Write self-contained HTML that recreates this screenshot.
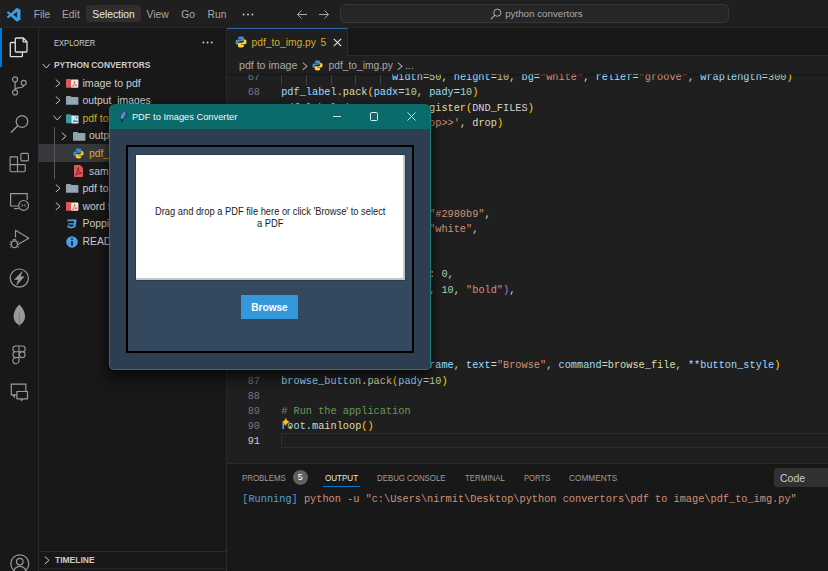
<!DOCTYPE html>
<html><head><meta charset="utf-8">
<style>
*{margin:0;padding:0;box-sizing:border-box}
html,body{width:828px;height:571px;overflow:hidden;background:#181818;font-family:"Liberation Sans",sans-serif;color:#cccccc;position:relative}
.a{position:absolute;white-space:nowrap}
.mono{font-family:"Liberation Mono",monospace;font-size:10.27px;line-height:15.17px;height:15.17px;white-space:pre}
#title{left:0;top:0;width:828px;height:28px;background:#1f1f1f;border-bottom:1px solid #262626}
#act{left:0;top:28px;width:39px;height:543px;background:#181818;border-right:1px solid #2b2b2b}
#side{left:39px;top:28px;width:188px;height:543px;background:#181818;border-right:1px solid #2b2b2b}
#tabs{left:227px;top:28px;width:601px;height:28px;background:#181818;border-bottom:1px solid #2b2b2b}
#editor{left:227px;top:56px;width:601px;height:407px;background:#1f1f1f}
#panel{left:227px;top:463px;width:601px;height:108px;background:#181818;border-top:1px solid #2b2b2b}
.menu{top:4.5px;height:19px;line-height:19px;font-size:10.3px;color:#a8a8a8}
.sx{transform-origin:0 0}
.ln{left:227px;width:33px;text-align:right;color:#6e7681}
.code{left:281.2px}
.v{color:#9cdcfe}.f{color:#dcdcaa}.s{color:#ce9178}.n{color:#b5cea8}.p{color:#d4d4d4}.g{color:#ffd700}.c{color:#6a9955}.o{color:#da70d6}.k{color:#569cd6}
.row{height:17.6px;line-height:17.6px;font-size:10.4px;color:#cccccc}
.ptab{top:470px;height:17px;line-height:17px;font-size:8.8px;color:#9d9d9d}
svg{position:absolute;overflow:visible}
</style></head><body>
<div id="title" class="a"></div>
<div id="act" class="a"></div>
<div id="side" class="a"></div>
<div id="tabs" class="a"></div>
<div id="editor" class="a"></div>
<div id="panel" class="a"></div>

<!-- ===== TITLE BAR ===== -->
<svg style="left:7px;top:7.5px" width="13.5" height="13.5" viewBox="0 0 100 100"><path fill="#3d9de6" d="M96.46 10.8L75.86.87a6.23 6.23 0 0 0-7.12 1.21L29.3 38.05 12.12 25.01a4.17 4.17 0 0 0-5.32.24l-5.5 5a4.17 4.17 0 0 0 0 6.16L16.2 50 1.3 63.59a4.17 4.17 0 0 0 0 6.16l5.5 5a4.17 4.17 0 0 0 5.32.24L29.3 61.95l39.44 35.97a6.23 6.23 0 0 0 7.12 1.21l20.6-9.93A6.25 6.25 0 0 0 100 83.57V16.43a6.25 6.25 0 0 0-3.54-5.63zM75 72.72L45.07 50 75 27.28z"/></svg>
<div class="a menu" style="left:33.7px">File</div>
<div class="a menu" style="left:62px">Edit</div>
<div class="a" style="left:86.4px;top:5.4px;width:54.4px;height:16.8px;border-radius:4px;background:#2f2f2f"></div>
<div class="a menu" style="left:92.3px;color:#e8e8e8">Selection</div>
<div class="a menu" style="left:146.6px">View</div>
<div class="a menu" style="left:181.2px">Go</div>
<div class="a menu" style="left:207.6px">Run</div>
<svg style="left:242px;top:12.5px" width="12" height="3" viewBox="0 0 12 3"><circle cx="1.6" cy="1.5" r="0.95" fill="#c8c8c8"/><circle cx="6" cy="1.5" r="0.95" fill="#c8c8c8"/><circle cx="10.4" cy="1.5" r="0.95" fill="#c8c8c8"/></svg>
<svg style="left:296px;top:9px" width="12" height="11" viewBox="0 0 12 11"><path d="M11 5.5H1.5M5.5 1.5L1.5 5.5 5.5 9.5" stroke="#a8a8a8" stroke-width="1" fill="none"/></svg>
<svg style="left:317.5px;top:9px" width="12" height="11" viewBox="0 0 12 11"><path d="M1 5.5H10.5M6.5 1.5L10.5 5.5 6.5 9.5" stroke="#a8a8a8" stroke-width="1" fill="none"/></svg>
<div class="a" style="left:340px;top:4.2px;width:389px;height:18.6px;border-radius:5px;background:#262626;border:1px solid #363636"></div>
<svg style="left:490px;top:8px" width="12" height="12" viewBox="0 0 12 12"><circle cx="7.3" cy="4.7" r="3.6" stroke="#b0b0b0" stroke-width="1" fill="none"/><path d="M4.7 7.3L0.8 11.2" stroke="#b0b0b0" stroke-width="1.1"/></svg>
<div class="a" style="left:505.2px;top:3.9px;height:19px;line-height:19px;font-size:9.75px;color:#aaaaaa">python convertors</div>

<!-- ===== ACTIVITY BAR ===== -->
<div class="a" style="left:0;top:28px;width:2px;height:39px;background:#0078d4"></div>
<!-- explorer -->
<svg style="left:9px;top:37px" width="20" height="21" viewBox="0 0 20 21"><path d="M7.1 1H14.3L18 4.7V14.2Q18 15 17.2 15H7.1Q6.3 15 6.3 14.2V1.8Q6.3 1 7.1 1Z M14.2 1.3V4.8H17.7" stroke="#dcdcdc" stroke-width="1.3" fill="none" stroke-linejoin="round"/><path d="M6.3 5.5H2.1Q1.3 5.5 1.3 6.3V18.9Q1.3 19.7 2.1 19.7H12.6Q13.4 19.7 13.4 18.9V15" stroke="#dcdcdc" stroke-width="1.3" fill="none" stroke-linejoin="round"/></svg>
<!-- scm -->
<svg style="left:10px;top:76px" width="18" height="21" viewBox="0 0 18 21"><circle cx="5.05" cy="3.4" r="2.5" stroke="#999999" stroke-width="1.2" fill="none"/><circle cx="5.05" cy="16.5" r="2.5" stroke="#999999" stroke-width="1.2" fill="none"/><circle cx="13.7" cy="6.8" r="2.5" stroke="#999999" stroke-width="1.2" fill="none"/><path d="M5.05 5.9V14M13.7 9.3C13.5 11.3 11.5 11.7 8.5 11.9C6.3 12.1 5.3 12.8 5.05 14" stroke="#999999" stroke-width="1.2" fill="none"/></svg>
<!-- search -->
<svg style="left:10px;top:114px" width="20" height="20" viewBox="0 0 20 20"><circle cx="12" cy="7.5" r="5.8" stroke="#999999" stroke-width="1.3" fill="none"/><path d="M7.8 11.7L1 18.6" stroke="#999999" stroke-width="1.4"/></svg>
<!-- extensions -->
<svg style="left:9px;top:152px" width="20" height="21" viewBox="0 0 20 21"><path d="M2 4.8H8.5V12.6H15.3Q16.2 12.6 16.2 13.5V18.8Q16.2 19.7 15.3 19.7H2Q1.1 19.7 1.1 18.8V5.7Q1.1 4.8 2 4.8Z M1.1 12.6H8.5V19.7" stroke="#999999" stroke-width="1.15" fill="none" stroke-linejoin="round"/><rect x="11.9" y="1.4" width="7.5" height="7.4" rx="1" stroke="#999999" stroke-width="1.15" fill="none"/></svg>
<!-- remote explorer -->
<svg style="left:9px;top:192px" width="21" height="19" viewBox="0 0 21 19"><path d="M9.5 14H1.6V1.6H18.2V8" stroke="#999999" stroke-width="1.2" fill="none"/><path d="M5 16.6H9.6" stroke="#999999" stroke-width="1.2"/><circle cx="14.6" cy="13.4" r="4.9" stroke="#999999" stroke-width="1.2" fill="none"/><path d="M12.6 11.9L13.9 13.4L12.6 14.9M16.6 11.9L15.3 13.4L16.6 14.9" stroke="#999999" stroke-width="0.9" fill="none"/></svg>
<!-- run debug -->
<svg style="left:9px;top:229px" width="21" height="20" viewBox="0 0 21 20"><path d="M6.5 8.5V1.3L19.8 9.2L9.8 15" stroke="#999999" stroke-width="1.2" fill="none" stroke-linejoin="round"/><ellipse cx="5.4" cy="15.2" rx="3" ry="3.4" stroke="#999999" stroke-width="1.2" fill="none"/><path d="M3.6 11.6A1.9 1.9 0 0 1 7.2 11.6" stroke="#999999" stroke-width="1.1" fill="none"/><path d="M0.8 12.6L2.4 13.4M0.6 15.4H2.4M1 18.4L2.6 17.2M10 12.6L8.4 13.4M10.2 15.4H8.4M9.8 18.4L8.2 17.2" stroke="#999999" stroke-width="1"/></svg>
<!-- lightning -->
<svg style="left:9px;top:268px" width="21" height="21" viewBox="0 0 21 21"><circle cx="10.3" cy="10.1" r="9.1" stroke="#999999" stroke-width="1.2" fill="none"/><path d="M13.2 3.5L5.6 11.5H9.5L7.6 17L15 8.8H11.2Z" fill="#9a9a9a" stroke="#9a9a9a" stroke-width="0.6" stroke-linejoin="round"/></svg>
<!-- leaf -->
<svg style="left:13.3px;top:304px" width="13" height="24" viewBox="0 0 13 24"><path d="M6.3 0.5C10 4 12 8 12 12.5C12 16.5 9.5 19.5 6.3 21.3C3.1 19.5 0.6 16.5 0.6 12.5C0.6 8 2.6 4 6.3 0.5Z" fill="#9a9a9a"/><path d="M6.3 9V23" stroke="#6e6e6e" stroke-width="0.7"/></svg>
<!-- figma -->
<svg style="left:12px;top:345px" width="15" height="20" viewBox="0 0 15 20"><path d="M3.8 1H7V6.8H3.8A2.9 2.9 0 0 1 3.8 1Z M7 1H10.3A2.9 2.9 0 0 1 10.3 6.8H7Z M3.8 6.8H7V12.6H3.8A2.9 2.9 0 0 1 3.8 6.8Z M3.8 12.6H7V15.5A3.1 3.1 0 1 1 3.8 12.6Z" stroke="#999999" stroke-width="1.1" fill="none"/><circle cx="10.2" cy="9.7" r="2.9" stroke="#999999" stroke-width="1.1" fill="none"/></svg>
<!-- comments -->
<svg style="left:10px;top:383px" width="19" height="19" viewBox="0 0 19 19"><path d="M6.9 11.9H1.3V1.2H15.8V8.5" stroke="#999999" stroke-width="1.2" fill="none"/><path d="M2.6 11.9L4.4 14V11.9" stroke="#999999" stroke-width="1.1" fill="none"/><path d="M6.9 8.5H17.5V15.8H13.2L11.4 17.5V15.8H6.9Z" stroke="#999999" stroke-width="1.2" fill="none" stroke-linejoin="round"/></svg>
<!-- account -->
<svg style="left:9.5px;top:554px" width="20" height="20" viewBox="0 0 20 20"><circle cx="9.8" cy="9.8" r="9" stroke="#999999" stroke-width="1.2" fill="none"/><circle cx="9.8" cy="7.6" r="3.3" stroke="#999999" stroke-width="1.2" fill="none"/><path d="M3.7 16.5C5 13.5 7.2 12.3 9.8 12.3C12.4 12.3 14.6 13.5 15.9 16.5" stroke="#999999" stroke-width="1.2" fill="none"/></svg>

<!-- ===== SIDEBAR ===== -->
<div class="a sx" style="left:53.9px;top:35.2px;height:16px;line-height:16px;font-size:8.8px;color:#cccccc;transform:scaleX(0.86)">EXPLORER</div>
<svg style="left:202px;top:40.8px" width="12" height="3" viewBox="0 0 12 3"><circle cx="1.4" cy="1.5" r="0.95" fill="#d0d0d0"/><circle cx="5.6" cy="1.5" r="0.95" fill="#d0d0d0"/><circle cx="9.8" cy="1.5" r="0.95" fill="#d0d0d0"/></svg>
<svg style="left:42.2px;top:62.5px" width="9" height="6" viewBox="0 0 9 6"><path d="M0.6 0.8L4.3 5 8 0.8" stroke="#c5c5c5" stroke-width="1" fill="none"/></svg>
<div class="a sx" style="left:54px;top:57.2px;height:16px;line-height:16px;font-size:8.8px;font-weight:bold;color:#cccccc;transform:scaleX(0.954)">PYTHON CONVERTORS</div>

<!-- tree rows -->
<div class="a" style="left:38px;top:144.2px;width:188px;height:17.8px;background:#37383c"></div>
<div class="a" style="left:53.5px;top:127px;width:1px;height:52px;background:#585858"></div>
<svg style="left:54.5px;top:78.7px" width="6" height="9" viewBox="0 0 6 9"><path d="M0.8 0.6L5 4.3 0.8 8" stroke="#c5c5c5" stroke-width="1" fill="none"/></svg>
<svg style="left:66px;top:78.7px" width="13" height="9" viewBox="0 0 13 9"><path d="M0 0.8Q0 0 0.8 0H5V8.8H0.8Q0 8.8 0 8.2Z" fill="#e05656"/><rect x="5" y="0.6" width="7.4" height="8.2" rx="0.8" fill="#f6e8e4"/><path d="M6.5 7.5C7.8 5.5 8.8 3.5 8.6 2.2C8.1 3.5 9.3 5.8 11.2 6.5C9.6 6.4 7.9 6.9 6.5 7.5Z" stroke="#d94a3a" stroke-width="0.7" fill="none"/></svg>
<div class="a row" style="left:82.5px;top:74.6px;font-size:10.6px;color:#cccccc">image to pdf</div>
<svg style="left:54.5px;top:96.3px" width="6" height="9" viewBox="0 0 6 9"><path d="M0.8 0.6L5 4.3 0.8 8" stroke="#c5c5c5" stroke-width="1" fill="none"/></svg>
<svg style="left:66px;top:96.3px" width="13" height="9" viewBox="0 0 13 9"><path d="M0 0.8Q0 0 0.8 0H4.5L5.5 1H11.7Q12.4 1 12.4 1.8V8.2Q12.4 8.8 11.7 8.8H0.8Q0 8.8 0 8.2Z" fill="#90a4ae"/><rect x="3" y="2.6" width="6" height="5" fill="#9fb1b9" opacity="0.35"/></svg>
<div class="a row" style="left:82.5px;top:92.2px;font-size:10.4px;color:#cccccc">output_images</div>
<svg style="left:53px;top:115.4px" width="9" height="6" viewBox="0 0 9 6"><path d="M0.6 0.8L4.3 5 8 0.8" stroke="#c5c5c5" stroke-width="1" fill="none"/></svg>
<svg style="left:66px;top:113.7px" width="13" height="10" viewBox="0 0 13 10"><path d="M0 1Q0 0.2 0.8 0.2H4.5L5.5 1.2H7V9.2H0.8Q0 9.2 0 8.4Z" fill="#3a9a9a"/><rect x="5.5" y="1.5" width="7" height="8" rx="0.8" fill="#d8e8ee"/><path d="M6.5 8L8.5 5.5 10 7 11 6 12 8Z" fill="#3a8ac8"/><circle cx="10.5" cy="3.5" r="0.9" fill="#3a8ac8"/></svg>
<div class="a row" style="left:82.5px;top:109.8px;font-size:10.4px;color:#d2ae22">pdf to image</div>
<svg style="left:60.8px;top:131.5px" width="6" height="9" viewBox="0 0 6 9"><path d="M0.8 0.6L5 4.3 0.8 8" stroke="#c5c5c5" stroke-width="1" fill="none"/></svg>
<svg style="left:72.5px;top:131.5px" width="13" height="9" viewBox="0 0 13 9"><path d="M0 0.8Q0 0 0.8 0H4.5L5.5 1H11.7Q12.4 1 12.4 1.8V8.2Q12.4 8.8 11.7 8.8H0.8Q0 8.8 0 8.2Z" fill="#90a4ae"/><rect x="3" y="2.6" width="6" height="5" fill="#9fb1b9" opacity="0.35"/></svg>
<div class="a row" style="left:89px;top:127.4px;font-size:10.4px;color:#cccccc">output_images</div>
<svg style="left:73px;top:147.9px" width="11" height="11" viewBox="0 0 12 12"><path d="M6 0.5C3 0.5 3.2 1.8 3.2 1.8V3.2H6.1V3.7H2C0.6 3.7 0.5 5.2 0.5 6.2C0.5 7.4 0.8 8.6 2 8.6H3V7.2C3 6 4 5.2 5 5.2H7.8C8.6 5.2 9 4.6 9 3.9V1.8C9 1 8 0.5 6 0.5Z" fill="#3d8fd6"/><path d="M6 11.5C9 11.5 8.8 10.2 8.8 10.2V8.8H5.9V8.3H10C11.4 8.3 11.5 6.8 11.5 5.8C11.5 4.6 11.2 3.4 10 3.4H9V4.8C9 6 8 6.8 7 6.8H4.2C3.4 6.8 3 7.4 3 8.1V10.2C3 11 4 11.5 6 11.5Z" fill="#f3cf3a"/></svg>
<div class="a row" style="left:89px;top:145.0px;font-size:10.4px;color:#d2ae22">pdf_to_img.py</div>
<svg style="left:74px;top:165.2px" width="9" height="12" viewBox="0 0 9 12"><path d="M0 0.8Q0 0 0.8 0H6L9 3V11.2Q9 12 8.2 12H0.8Q0 12 0 11.2Z" fill="#e05656"/><path d="M1.8 10C3.2 7.5 4.5 4.5 4.2 2.5C3.6 4.3 5 7.2 7.4 8.2C5.5 8.1 3.5 8.9 1.8 10Z" stroke="#3a1a1a" stroke-width="0.8" fill="none" opacity="0.8"/></svg>
<div class="a row" style="left:89px;top:162.6px;font-size:10.4px;color:#cccccc">sample.pdf</div>
<svg style="left:54.5px;top:184.3px" width="6" height="9" viewBox="0 0 6 9"><path d="M0.8 0.6L5 4.3 0.8 8" stroke="#c5c5c5" stroke-width="1" fill="none"/></svg>
<svg style="left:66px;top:184.3px" width="13" height="9" viewBox="0 0 13 9"><path d="M0 0.8Q0 0 0.8 0H4.5L5.5 1H11.7Q12.4 1 12.4 1.8V8.2Q12.4 8.8 11.7 8.8H0.8Q0 8.8 0 8.2Z" fill="#90a4ae"/><rect x="3" y="2.6" width="6" height="5" fill="#9fb1b9" opacity="0.35"/></svg>
<div class="a row" style="left:82.5px;top:180.2px;font-size:10.4px;color:#cccccc">pdf to word</div>
<svg style="left:54.5px;top:201.9px" width="6" height="9" viewBox="0 0 6 9"><path d="M0.8 0.6L5 4.3 0.8 8" stroke="#c5c5c5" stroke-width="1" fill="none"/></svg>
<svg style="left:66px;top:201.9px" width="13" height="9" viewBox="0 0 13 9"><path d="M0 0.8Q0 0 0.8 0H5V8.8H0.8Q0 8.8 0 8.2Z" fill="#e05656"/><rect x="5" y="0.6" width="7.4" height="8.2" rx="0.8" fill="#f6e8e4"/><path d="M6.5 7.5C7.8 5.5 8.8 3.5 8.6 2.2C8.1 3.5 9.3 5.8 11.2 6.5C9.6 6.4 7.9 6.9 6.5 7.5Z" stroke="#d94a3a" stroke-width="0.7" fill="none"/></svg>
<div class="a row" style="left:82.5px;top:197.8px;font-size:10.4px;color:#cccccc">word to pdf</div>
<svg style="left:66.3px;top:218.6px" width="11" height="10" viewBox="0 0 11 10"><path d="M1.6 0.5H10.6L9.4 8.2L5 9.6L1.2 8.2L1.5 6.6H3.3L3.2 7.2L5.2 7.8L7.4 7.2L7.7 5.6H1.9L2.2 4.2H7.9L8.1 2.3H1.3Z" fill="#4a9fe8"/></svg>
<div class="a row" style="left:82.5px;top:215.4px;font-size:10.4px;color:#cccccc">Poppins-Bold.ttf</div>
<svg style="left:66.2px;top:235.5px" width="12" height="12" viewBox="0 0 12 12"><circle cx="6" cy="6" r="5.8" fill="#4a9fe8"/><rect x="5.1" y="5" width="1.8" height="4.6" fill="#102030"/><circle cx="6" cy="3.1" r="1" fill="#102030"/></svg>
<div class="a row" style="left:82.5px;top:233.0px;font-size:10.4px;color:#cccccc">README.md</div>
<!-- timeline -->
<div class="a" style="left:39px;top:551px;width:187px;height:1px;background:#2b2b2b"></div>
<svg style="left:44.2px;top:555.5px" width="6" height="9" viewBox="0 0 6 9"><path d="M0.8 0.6L5 4.3 0.8 8" stroke="#c5c5c5" stroke-width="1" fill="none"/></svg>
<div class="a sx" style="left:54.7px;top:551.7px;height:16px;line-height:16px;font-size:8.8px;font-weight:bold;color:#cccccc;transform:scaleX(0.963)">TIMELINE</div>
<div class="a" style="left:39px;top:568.3px;width:187px;height:1px;background:#262626"></div>

<!-- ===== EDITOR TABS ===== -->
<div class="a" style="left:227px;top:28px;width:121px;height:28px;background:#1f1f1f;border-top:1px solid #2b62a3;border-right:1px solid #2b2b2b"></div>
<svg style="left:235px;top:36.3px" width="12" height="12" viewBox="0 0 12 12"><path d="M6 0.5C3 0.5 3.2 1.8 3.2 1.8V3.2H6.1V3.7H2C0.6 3.7 0.5 5.2 0.5 6.2C0.5 7.4 0.8 8.6 2 8.6H3V7.2C3 6 4 5.2 5 5.2H7.8C8.6 5.2 9 4.6 9 3.9V1.8C9 1 8 0.5 6 0.5Z" fill="#4b8bbe"/><path d="M6 11.5C9 11.5 8.8 10.2 8.8 10.2V8.8H5.9V8.3H10C11.4 8.3 11.5 6.8 11.5 5.8C11.5 4.6 11.2 3.4 10 3.4H9V4.8C9 6 8 6.8 7 6.8H4.2C3.4 6.8 3 7.4 3 8.1V10.2C3 11 4 11.5 6 11.5Z" fill="#ffd43b"/></svg>
<div class="a" style="left:251.5px;top:34px;height:17px;line-height:17px;font-size:10.25px;color:#d2ae22">pdf_to_img.py</div>
<div class="a" style="left:320.5px;top:34px;height:17px;line-height:17px;font-size:10.25px;color:#d2ae22">5</div>
<svg style="left:333px;top:37.7px" width="9" height="9" viewBox="0 0 9 9"><path d="M0.8 0.8L8.2 8.2M8.2 0.8L0.8 8.2" stroke="#e0e0e0" stroke-width="1.1"/></svg>
<!-- breadcrumbs -->
<div class="a" style="left:239px;top:57px;height:17px;line-height:17px;font-size:10.6px;color:#a9a9a9">pdf to image</div>
<svg style="left:302px;top:61.5px" width="6" height="9" viewBox="0 0 6 9"><path d="M0.7 0.6L5 4.2 0.7 7.8" stroke="#a9a9a9" stroke-width="1.05" fill="none"/></svg>
<svg style="left:311.5px;top:60px" width="11" height="11" viewBox="0 0 12 12"><path d="M6 0.5C3 0.5 3.2 1.8 3.2 1.8V3.2H6.1V3.7H2C0.6 3.7 0.5 5.2 0.5 6.2C0.5 7.4 0.8 8.6 2 8.6H3V7.2C3 6 4 5.2 5 5.2H7.8C8.6 5.2 9 4.6 9 3.9V1.8C9 1 8 0.5 6 0.5Z" fill="#4b8bbe"/><path d="M6 11.5C9 11.5 8.8 10.2 8.8 10.2V8.8H5.9V8.3H10C11.4 8.3 11.5 6.8 11.5 5.8C11.5 4.6 11.2 3.4 10 3.4H9V4.8C9 6 8 6.8 7 6.8H4.2C3.4 6.8 3 7.4 3 8.1V10.2C3 11 4 11.5 6 11.5Z" fill="#ffd43b"/></svg>
<div class="a" style="left:328.5px;top:57px;height:17px;line-height:17px;font-size:10.25px;color:#a9a9a9">pdf_to_img.py</div>
<svg style="left:397px;top:61.5px" width="6" height="9" viewBox="0 0 6 9"><path d="M0.7 0.6L5 4.2 0.7 7.8" stroke="#a9a9a9" stroke-width="1.05" fill="none"/></svg>
<div class="a" style="left:405px;top:57px;height:17px;line-height:17px;font-size:10.25px;color:#a9a9a9">...</div>
<!-- ===== CODE ===== -->
<div class="a" style="left:227px;top:73.6px;width:601px;height:389.4px;overflow:hidden"><div class="a" style="left:0;top:1.9px;width:601px;height:400px">
<div class="a mono" style="left:0;top:-5.25px;width:33px;text-align:right;color:#6e7681">67</div>
<div class="a mono" style="left:54.2px;top:-5.25px"><span class="p">                  </span><span class="v">width</span><span class="p">=</span><span class="n">50</span><span class="p">, </span><span class="v">height</span><span class="p">=</span><span class="n">10</span><span class="p">, </span><span class="v">bg</span><span class="p">=</span><span class="s">"white"</span><span class="p">, </span><span class="v">relief</span><span class="p">=</span><span class="s">"groove"</span><span class="p">, </span><span class="v">wraplength</span><span class="p">=</span><span class="n">300</span><span class="g">)</span></div>
<div class="a mono" style="left:0;top:9.92px;width:33px;text-align:right;color:#6e7681">68</div>
<div class="a mono" style="left:54.2px;top:9.92px"><span class="v">pdf_label</span><span class="p">.</span><span class="f">pack</span><span class="g">(</span><span class="v">padx</span><span class="p">=</span><span class="n">10</span><span class="p">, </span><span class="v">pady</span><span class="p">=</span><span class="n">10</span><span class="g">)</span></div>
<div class="a mono" style="left:0;top:25.09px;width:33px;text-align:right;color:#6e7681">69</div>
<div class="a mono" style="left:54.2px;top:25.09px"><span class="v">pdf_label</span><span class="p">.</span><span class="f">drop_target_register</span><span class="g">(</span><span class="p">DND_FILES</span><span class="g">)</span></div>
<div class="a mono" style="left:0;top:40.26px;width:33px;text-align:right;color:#6e7681">70</div>
<div class="a mono" style="left:54.2px;top:40.26px"><span class="v">pdf_label</span><span class="p">.</span><span class="f">dnd_bind</span><span class="g">(</span><span class="s">'&lt;&lt;Drop&gt;&gt;'</span><span class="p">, </span><span class="f">drop</span><span class="g">)</span></div>
<div class="a mono" style="left:0;top:55.42px;width:33px;text-align:right;color:#6e7681">71</div>
<div class="a mono" style="left:0;top:70.59px;width:33px;text-align:right;color:#6e7681">72</div>
<div class="a mono" style="left:54.2px;top:70.59px"><span class="c"># Button style</span></div>
<div class="a mono" style="left:0;top:85.76px;width:33px;text-align:right;color:#6e7681">73</div>
<div class="a mono" style="left:54.2px;top:85.76px"><span class="v">button_style</span><span class="p"> = </span><span class="g">{</span></div>
<div class="a mono" style="left:0;top:100.93px;width:33px;text-align:right;color:#6e7681">74</div>
<div class="a mono" style="left:54.2px;top:100.93px"><span class="p">    </span><span class="s">"bg"</span><span class="p">: </span><span class="s">"#3498db"</span><span class="p">,</span></div>
<div class="a mono" style="left:0;top:116.10px;width:33px;text-align:right;color:#6e7681">75</div>
<div class="a mono" style="left:54.2px;top:116.10px"><span class="p">    </span><span class="s">"fg"</span><span class="p">: </span><span class="s">"white"</span><span class="p">,</span></div>
<div class="a mono" style="left:0;top:131.28px;width:33px;text-align:right;color:#6e7681">76</div>
<div class="a mono" style="left:54.2px;top:131.28px"><span class="p">    </span><span class="s">"activebackground"</span><span class="p">: </span><span class="s">"#2980b9"</span><span class="p">,</span></div>
<div class="a mono" style="left:0;top:146.44px;width:33px;text-align:right;color:#6e7681">77</div>
<div class="a mono" style="left:54.2px;top:146.44px"><span class="p">    </span><span class="s">"activeforeground"</span><span class="p">: </span><span class="s">"white"</span><span class="p">,</span></div>
<div class="a mono" style="left:0;top:161.61px;width:33px;text-align:right;color:#6e7681">78</div>
<div class="a mono" style="left:54.2px;top:161.61px"><span class="p">    </span><span class="s">"relief"</span><span class="p">: </span><span class="s">"flat"</span><span class="p">,</span></div>
<div class="a mono" style="left:0;top:176.78px;width:33px;text-align:right;color:#6e7681">79</div>
<div class="a mono" style="left:54.2px;top:176.78px"><span class="p">    </span><span class="s">"bd"</span><span class="p">: </span><span class="n">0</span><span class="p">,</span></div>
<div class="a mono" style="left:0;top:191.95px;width:33px;text-align:right;color:#6e7681">80</div>
<div class="a mono" style="left:54.2px;top:191.95px"><span class="p">    </span><span class="s">"highlightthickness"</span><span class="p">: </span><span class="n">0</span><span class="p">,</span></div>
<div class="a mono" style="left:0;top:207.13px;width:33px;text-align:right;color:#6e7681">81</div>
<div class="a mono" style="left:54.2px;top:207.13px"><span class="p">    </span><span class="s">"font"</span><span class="p">: </span><span class="o">(</span><span class="s">"Helvetica"</span><span class="p">, </span><span class="n">10</span><span class="p">, </span><span class="s">"bold"</span><span class="o">)</span><span class="p">,</span></div>
<div class="a mono" style="left:0;top:222.30px;width:33px;text-align:right;color:#6e7681">82</div>
<div class="a mono" style="left:54.2px;top:222.30px"><span class="g">}</span></div>
<div class="a mono" style="left:0;top:237.47px;width:33px;text-align:right;color:#6e7681">83</div>
<div class="a mono" style="left:0;top:252.64px;width:33px;text-align:right;color:#6e7681">84</div>
<div class="a mono" style="left:54.2px;top:267.81px"><span class="c"># Browse button</span></div>
<div class="a mono" style="left:0;top:267.81px;width:33px;text-align:right;color:#6e7681">85</div>
<div class="a mono" style="left:54.2px;top:282.98px"><span class="v">browse_button</span><span class="p"> = </span><span class="f">Button</span><span class="g">(</span><span class="v">frame</span><span class="p">, </span><span class="v">text</span><span class="p">=</span><span class="s">"Browse"</span><span class="p">, </span><span class="v">command</span><span class="p">=</span><span class="f">browse_file</span><span class="p">, **</span><span class="v">button_style</span><span class="g">)</span></div>
<div class="a mono" style="left:0;top:282.98px;width:33px;text-align:right;color:#6e7681">86</div>
<div class="a mono" style="left:0;top:298.15px;width:33px;text-align:right;color:#6e7681">87</div>
<div class="a mono" style="left:54.2px;top:298.15px"><span class="v">browse_button</span><span class="p">.</span><span class="f">pack</span><span class="g">(</span><span class="v">pady</span><span class="p">=</span><span class="n">10</span><span class="g">)</span></div>
<div class="a mono" style="left:0;top:313.31px;width:33px;text-align:right;color:#6e7681">88</div>
<div class="a mono" style="left:0;top:328.49px;width:33px;text-align:right;color:#6e7681">89</div>
<div class="a mono" style="left:54.2px;top:328.49px"><span class="c"># Run the application</span></div>
<div class="a mono" style="left:0;top:343.66px;width:33px;text-align:right;color:#6e7681">90</div>
<div class="a mono" style="left:54.2px;top:343.66px"><span class="v">root</span><span class="p">.</span><span class="f">mainloop</span><span class="g">()</span></div>
<div class="a mono" style="left:0;top:358.83px;width:33px;text-align:right;color:#cccccc">91</div>
<div class="a" style="left:54.2px;top:0;width:1px;height:9.9px;background:#404040"></div>
<div class="a" style="left:78.8px;top:0;width:1px;height:9.9px;background:#404040"></div>
<div class="a" style="left:103.5px;top:0;width:1px;height:9.9px;background:#404040"></div>
<div class="a" style="left:128.1px;top:0;width:1px;height:9.9px;background:#404040"></div>
<div class="a" style="left:152.8px;top:0;width:1px;height:9.9px;background:#404040"></div>
<div class="a" style="left:53.8px;top:357.6px;width:560px;height:15.2px;border:1px solid #2e2e2e"></div>
</div></div>
<div class="a" style="left:227px;top:73.6px;width:601px;height:2.5px;background:linear-gradient(#00000077,#00000000)"></div>

<svg style="left:281px;top:417px" width="13" height="14" viewBox="0 0 13 14"><path d="M4.8 0.6000000000000005Q5.444999999999999 4.255000000000001 9.1 4.9Q5.444999999999999 5.545 4.8 9.2Q4.155 5.545 0.5 4.9Q4.155 4.255000000000001 4.8 0.6000000000000005Z" fill="#f5c518"/><path d="M9.3 7.4Q9.735000000000001 9.865 12.200000000000001 10.3Q9.735000000000001 10.735000000000001 9.3 13.200000000000001Q8.865 10.735000000000001 6.4 10.3Q8.865 9.865 9.3 7.4Z" fill="#f5c518" stroke="#1f1f1f" stroke-width="0.5"/></svg>
<!-- ===== PANEL ===== -->
<div class="a ptab sx" style="left:241.8px;transform:scaleX(0.895)">PROBLEMS</div>
<div class="a" style="left:292.8px;top:469.9px;width:14.8px;height:14.8px;border-radius:50%;background:#616161;color:#ffffff;font-size:9px;line-height:14.8px;text-align:center">5</div>
<div class="a ptab sx" style="left:324.7px;color:#e7e7e7;transform:scaleX(0.915)">OUTPUT</div>
<div class="a" style="left:323.3px;top:486px;width:36.3px;height:1px;background:#0078d4"></div>
<div class="a ptab sx" style="left:376.8px;transform:scaleX(0.893)">DEBUG CONSOLE</div>
<div class="a ptab sx" style="left:465.1px;transform:scaleX(0.898)">TERMINAL</div>
<div class="a ptab sx" style="left:524.3px;transform:scaleX(0.872)">PORTS</div>
<div class="a ptab sx" style="left:569.4px;transform:scaleX(0.939)">COMMENTS</div>
<div class="a" style="left:773.6px;top:467.7px;width:60px;height:19px;border-radius:3px;background:#313131"></div>
<div class="a" style="left:780px;top:469.3px;height:18.5px;line-height:18.5px;font-size:10.5px;color:#cccccc">Code</div>
<div class="a mono" style="left:242.3px;top:491.5px"><span style="color:#569cd6">[Running]</span><span class="s"> python -u "c:\Users\nirmit\Desktop\python convertors\pdf to image\pdf_to_img.py"</span></div>

<!-- ===== DIALOG WINDOW ===== -->
<div class="a" style="left:109px;top:104px;width:322px;height:265.5px;border-radius:6px 6px 5px 5px;background:#2c3e50;border:1px solid #197a7a;border-top-color:#0b6b6b;box-shadow:0 9px 14px rgba(0,0,0,0.5), 0 2px 10px rgba(0,0,0,0.35);overflow:hidden">
  <div class="a" style="left:0;top:0;width:320px;height:24.3px;background:#0b6b6b"></div>
</div>
<svg style="left:118px;top:109px" width="10" height="14" viewBox="0 0 10 14"><defs><linearGradient id="fg" x1="0" y1="0" x2="1" y2="0.3"><stop offset="0" stop-color="#9cc0f0"/><stop offset="1" stop-color="#2c58b0"/></linearGradient></defs><path d="M7.8 1.2C9.5 3 8.8 7.5 4.2 10.8C2.2 10.6 1.8 8 3.4 5.2C4.8 2.8 6.5 1.5 7.8 1.2Z" fill="url(#fg)" stroke="#162850" stroke-width="0.7"/><path d="M3.6 10.2L4.2 13.2" stroke="#0e1626" stroke-width="1.4"/></svg>
<div class="a" style="left:131.9px;top:108.8px;height:17px;line-height:17px;font-size:9.3px;color:#f4f8f8">PDF to Images Converter</div>
<div class="a" style="left:333px;top:116px;width:8px;height:0.9px;background:#cfe0e0"></div>
<div class="a" style="left:369.7px;top:112.4px;width:8.5px;height:8.5px;border:1px solid #e8f0f0;border-radius:1.5px"></div>
<svg style="left:406.8px;top:112px" width="9" height="9" viewBox="0 0 9 9"><path d="M0.5 0.5L8.5 8.5M8.5 0.5L0.5 8.5" stroke="#e8f0f0" stroke-width="0.9"/></svg>
<!-- frame -->
<div class="a" style="left:126px;top:145px;width:288px;height:208px;background:#34495e;border:2px solid #000000"></div>
<!-- label -->
<div class="a" style="left:135px;top:154px;width:271px;height:127px;background:#ffffff;border:1px solid #2a3a4d;box-shadow:inset -2px -2px 0 #c6c6c6"></div>
<div class="a" style="left:154.7px;top:206px;height:12px;line-height:12px;font-size:10.3px;color:#1c1c1c;transform:scaleX(0.905);transform-origin:0 0">Drag and drop a PDF file here or click 'Browse' to select</div>
<div class="a" style="left:256.8px;top:218.3px;height:12px;line-height:12px;font-size:10.3px;color:#1c1c1c;transform:scaleX(0.905);transform-origin:0 0">a PDF</div>
<!-- button -->
<div class="a" style="left:241px;top:295px;width:57px;height:24px;background:#3498db;color:#ffffff;font-weight:bold;font-size:10.1px;line-height:26.5px;text-align:center">Browse</div>
</body></html>
